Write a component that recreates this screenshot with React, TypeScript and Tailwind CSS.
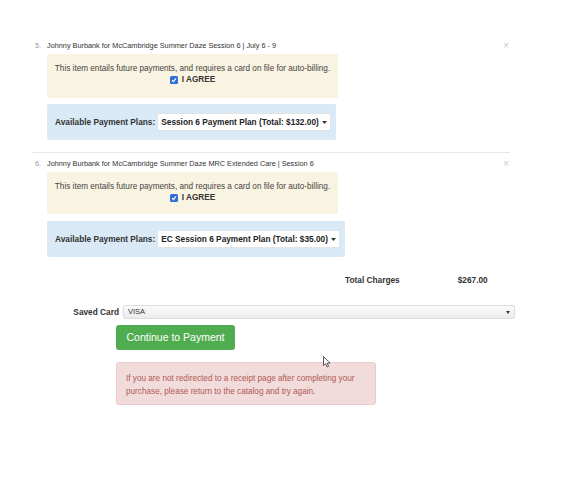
import React from "react";

function Caret() {
  return (
    <svg width="5" height="3" viewBox="0 0 5 3" className="ml-[3px] shrink-0">
      <path d="M0 0 L5 0 L2.5 3 Z" fill="#333" />
    </svg>
  );
}

function Check() {
  return (
    <span className="inline-flex items-center justify-center w-[8px] h-[8px] rounded-[1.5px] bg-[#2f6fd6] mr-[4px]">
      <svg width="6" height="6" viewBox="0 0 6 6">
        <path d="M1 3.2 L2.4 4.6 L5 1.4" stroke="#fff" strokeWidth="1.2" fill="none" />
      </svg>
    </span>
  );
}

function Item({ n, title, plan, first }: { n: number; title: string; plan: string; first?: boolean }) {
  return (
    <div className="flex w-[480px]">
      <div className="w-[12px] text-[7.3px] text-[#999] leading-[12px]">{n}.</div>
      <div className="flex-1">
        <div className="flex items-center h-[12px]">
          <div className="text-[7.3px] text-[#333] leading-[12px] whitespace-nowrap">{title}</div>
          <div className="flex-1" />
          <div className="text-[10px] text-[#ccc] leading-[12px] mr-[6px]">×</div>
        </div>
        <div
          className={`mt-[2px] w-[291px] bg-[#f9f3e1] rounded-[2px] pt-[9px] ${first ? "h-[44px]" : "h-[42px]"} flex flex-col items-center`}
        >
          <div className="text-[8.2px] text-[#444] leading-[11px] whitespace-nowrap">
            This item entails future payments, and requires a card on file for auto-billing.
          </div>
          <div className="flex items-center leading-[11px]">
            <Check />
            <span className="text-[8.2px] font-bold text-[#333]">I AGREE</span>
          </div>
        </div>
        <div className={`${first ? "mt-[6px]" : "mt-[7px]"} w-fit bg-[#d9e9f6] rounded-[2px] h-[36px] flex items-center pl-[8px] pr-[5px]`}>
          <span className="text-[8.3px] font-bold text-[#333] mr-[2px] whitespace-nowrap">Available Payment Plans:</span>
          <div className="h-[18px] bg-white border border-[#e3e3e3] rounded-[2px] flex items-center pl-[3px] pr-[3px]">
            <span className="text-[8.3px] font-bold text-[#222] whitespace-nowrap">{plan}</span>
            <Caret />
          </div>
        </div>
      </div>
    </div>
  );
}

export default function App() {
  return (
    <div className="w-[568px] h-[480px] bg-white relative font-['Liberation_Sans',Arial,sans-serif]">
      <div className="pl-[35px] pt-[40px]">
        <Item
          n={5}
          first
          title="Johnny Burbank for McCambridge Summer Daze Session 6 | July 6 - 9"
          plan="Session 6 Payment Plan (Total: $132.00)"
        />
        <div className="mt-[12px] w-[478px] h-[1px] bg-[#e8e8e8] -ml-[3px]" />
        <div className="mt-[5px]">
          <Item
            n={6}
            title="Johnny Burbank for McCambridge Summer Daze MRC Extended Care | Session 6"
            plan="EC Session 6 Payment Plan (Total: $35.00)"
          />
        </div>
        <div className="flex mt-[17px] h-[12px] items-center">
          <span className="ml-[310px] text-[8.3px] font-bold text-[#333]">Total Charges</span>
          <span className="ml-[58px] text-[8.3px] font-bold text-[#333]">$267.00</span>
        </div>
        <div className="flex items-center mt-[19px]">
          <span className="w-[84px] text-right text-[8.3px] font-bold text-[#333]">Saved Card</span>
          <div className="ml-[4px] w-[392px] h-[14px] border border-[#ddd] rounded-[2px] bg-gradient-to-b from-[#fafafa] to-[#ececec] flex items-center px-[4px]">
            <span className="text-[7.5px] text-[#333]">VISA</span>
            <div className="flex-1" />
            <svg width="4" height="3" viewBox="0 0 4 3">
              <path d="M0 0 L4 0 L2 3 Z" fill="#333" />
            </svg>
          </div>
        </div>
        <div className="ml-[81px] mt-[6px] w-[119px] h-[25px] bg-[#4fad4f] rounded-[3px] flex items-center justify-center">
          <span className="text-[10.5px] text-white">Continue to Payment</span>
        </div>
        <div className="ml-[81px] mt-[12px] w-[260px] h-[43px] bg-[#f2dbdb] border border-[#ebcccc] rounded-[3px] pl-[9px] pt-[9px]">
          <div className="text-[8.2px] leading-[13px] text-[#b05a55] whitespace-nowrap">
            If you are not redirected to a receipt page after completing your
            <br />
            purchase, please return to the catalog and try again.
          </div>
        </div>
      </div>
      <svg className="absolute left-[323px] top-[356px]" width="8" height="12" viewBox="0 0 8 12">
        <path d="M0.5 0.5 L0.5 9.5 L2.6 7.6 L4.2 11 L5.6 10.4 L4.1 7.1 L7 7.1 Z" fill="#fff" stroke="#333" strokeWidth="0.8" />
      </svg>
    </div>
  );
}
